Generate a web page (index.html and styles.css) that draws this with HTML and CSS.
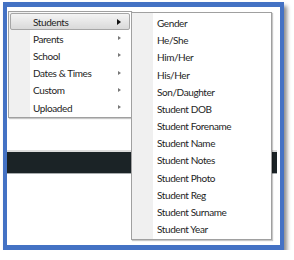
FILE: index.html
```html
<!DOCTYPE html>
<html>
<head>
<meta charset="utf-8">
<link rel="stylesheet" href="styles.css">
</head>
<body>
<div class="frame">
  <div class="content">
    <div class="darkbar"></div>
  </div>
  <div class="menu main-menu">
    <div class="item active"><span class="label">Students</span><span class="arrow dark"></span></div>
    <div class="item"><span class="label">Parents</span><span class="arrow"></span></div>
    <div class="item"><span class="label">School</span><span class="arrow"></span></div>
    <div class="item"><span class="label">Dates &amp; Times</span><span class="arrow"></span></div>
    <div class="item"><span class="label">Custom</span><span class="arrow"></span></div>
    <div class="item"><span class="label">Uploaded</span><span class="arrow"></span></div>
  </div>
  <div class="menu sub-menu">
    <div class="item"><span class="label">Gender</span></div>
    <div class="item"><span class="label">He/She</span></div>
    <div class="item"><span class="label">Him/Her</span></div>
    <div class="item"><span class="label">His/Her</span></div>
    <div class="item"><span class="label">Son/Daughter</span></div>
    <div class="item"><span class="label">Student DOB</span></div>
    <div class="item"><span class="label">Student Forename</span></div>
    <div class="item"><span class="label">Student Name</span></div>
    <div class="item"><span class="label">Student Notes</span></div>
    <div class="item"><span class="label">Student Photo</span></div>
    <div class="item"><span class="label">Student Reg</span></div>
    <div class="item"><span class="label">Student Surname</span></div>
    <div class="item"><span class="label">Student Year</span></div>
  </div>
</div>
</body>
</html>
```
FILE: styles.css
```css
html, body {
  margin: 0;
  padding: 0;
  background: #ffffff;
}
body {
  padding: 2px 0 0 3px;
  font-family: "Lato", "Open Sans", "DejaVu Sans", sans-serif;
}
.frame {
  position: relative;
  box-sizing: border-box;
  width: 281px;
  height: 248px;
  border-style: solid;
  border-color: #4472c4;
  border-width: 5px 4px 5px 4px;
  background: #ffffff;
  box-shadow: 3px 4px 4px rgba(0, 0, 0, 0.45);
}
.content {
  padding: 143px 3px 0 0;
}
.darkbar {
  height: 21px;
  background: #1b2326;
  border-top: 2px solid #dcdcdc;
  border-bottom: 1px solid #a8acae;
}
.menu {
  position: absolute;
  box-sizing: border-box;
  border: 1px solid #a0a0a0;
  background: linear-gradient(to right, #f0f0f0 0, #f0f0f0 var(--gutter), #ffffff var(--gutter));
  box-shadow: 1px 1px 1px rgba(0, 0, 0, 0.22);
  font-size: 10px;
  letter-spacing: -0.4px;
  color: #1e1e1e;
}
.main-menu {
  --gutter: 21px;
  left: 1px;
  top: 4px;
  width: 124px;
  padding: 1px 0;
}
.sub-menu {
  --gutter: 21px;
  left: 124px;
  top: 5px;
  width: 141px;
  padding: 1.4px 0;
}
.item {
  position: relative;
  display: flex;
  align-items: center;
  height: 17.2px;
  box-sizing: border-box;
  margin: 0 1px;
}
.main-menu .label {
  padding-left: 23px;
}
.sub-menu .label {
  padding-left: 24px;
}
.item.active {
  border: 1px solid #a6a6a6;
  border-radius: 2px;
  background: linear-gradient(to bottom, #f4f4f4, #d9d9d9);
}
.item.active .label {
  padding-left: 22px;
}
.arrow {
  position: absolute;
  right: 9px;
  top: 6px;
  width: 0;
  height: 0;
  border-top: 2.5px solid transparent;
  border-bottom: 2.5px solid transparent;
  border-left: 3px solid #777777;
}
.item.active .arrow {
  top: 5px;
  right: 8px;
}
.arrow.dark {
  border-top-width: 3px;
  border-bottom-width: 3px;
  border-left: 4px solid #111111;
}
```
